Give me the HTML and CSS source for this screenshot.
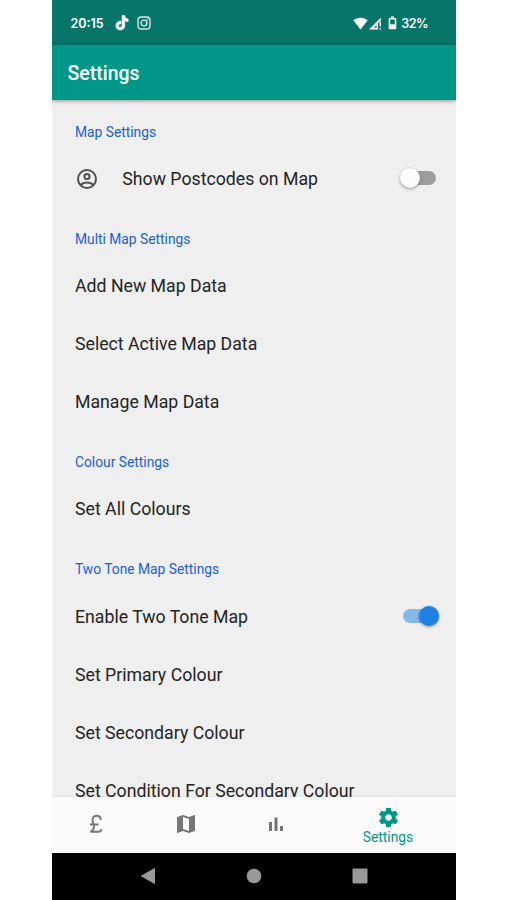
FILE: index.html
```html
<!DOCTYPE html>
<html lang="en">
<head>
<meta charset="utf-8">
<title>Settings</title>
<link rel="stylesheet" href="styles.css">
</head>
<body>
<div class="phone">
  <div class="status">
    <span class="clock">20:15</span>
    <svg class="tiktok" width="14" height="16" viewBox="0 0 14 16"><path d="M7 .5h2.700c.2 2 1.300 3.200 3.500 3.500v2.700c-1.300 0-2.400-.4-3.400-1v4.800c0 6-8.900 6-9 .2 0-3.100 2.500-4.900 5.300-4.500v2.800c-1.400-.3-2.500.4-2.500 1.700 0 2.200 3.400 2.100 3.400-.5z" fill="#fff" stroke="#fff" stroke-width=".5"/></svg>
    <svg class="insta" width="14" height="14" viewBox="0 0 14 14" fill="none" stroke="#d3e8e5" stroke-width="1.400"><rect x="1" y="1" width="12" height="12" rx="3.300"/><circle cx="7" cy="7" r="2.900"/><circle cx="10.400" cy="3.600" r=".8" fill="#d3e8e5" stroke="none"/></svg>
    <span class="spacer"></span>
    <svg width="15" height="13" viewBox="0 0 15 13"><path d="M.3 3.300C4.200-.2 10.800-.2 14.700 3.300L7.500 12.500z" fill="#fff"/></svg>
    <svg class="signal" width="13" height="13" viewBox="0 0 13 13"><path d="M0 12.500L11.800.7V3.500L9 6v6.500z" fill="#fff"/><path d="M5 10.800L7.600 8V10.800z" fill="#08756a"/><path d="M10.500 4.500H12V9.500H10.500zM10.500 11H12v1.500H10.500z" fill="#fff"/></svg>
    <svg class="battery" width="9" height="14" viewBox="0 0 9 14"><path d="M3 .5h3V2h1.200q1.100 0 1.100 1.100v9q0 1.200-1.100 1.200H1.800Q.7 13.300.7 12.100v-9Q.7 2 1.800 2H3z" fill="#fff"/><path d="M2.200 3.500h4.600v4.800H2.200z" fill="#08756a"/></svg>
    <span class="clock percent">32%</span>
  </div>
  <header class="appbar">Settings</header>
  <main class="list">
    <h2>Map Settings</h2>
    <div class="row">
      <svg class="account" width="24" height="24" viewBox="0 0 24 24" fill="none" stroke="#505050" stroke-width="2"><circle cx="12" cy="12" r="9"/><circle cx="12" cy="9.500" r="2.600"/><path d="M5.800 18c3-3.400 9.400-3.400 12.400 0"/></svg>
      <span>Show Postcodes on Map</span>
      <span class="switch"></span>
    </div>
    <h2>Multi Map Settings</h2>
    <div class="row"><span>Add New Map Data</span></div>
    <div class="row"><span>Select Active Map Data</span></div>
    <div class="row"><span>Manage Map Data</span></div>
    <h2>Colour Settings</h2>
    <div class="row"><span>Set All Colours</span></div>
    <h2>Two Tone Map Settings</h2>
    <div class="row"><span>Enable Two Tone Map</span><span class="switch on"></span></div>
    <div class="row"><span>Set Primary Colour</span></div>
    <div class="row"><span>Set Secondary Colour</span></div>
    <div class="row"><span>Set Condition For Secondary Colour</span></div>
  </main>
  <nav class="tabs">
    <div class="tab"><svg width="14" height="20" viewBox="0 0 14 20" fill="none" stroke="#757575" stroke-width="1.900"><path d="M11.800 6C11.500.2 3.500.5 3.500 5.800c0 2.700 1.500 4.200 1.500 7 0 2.300-1.200 3.800-3.500 5h8.300c1.700 0 2.500-.8 2.600-2.800M1 10.500h8.500"/></svg></div>
    <div class="tab"><svg width="24" height="24" viewBox="0 0 24 24" fill="#757575"><path d="M20.500 3l-.16.030L15 5.100 9 3 3.360 4.900c-.21.070-.36.250-.36.480V20.500c0 .28.220.5.500.5l.16-.030L9 18.900l6 2.100 5.640-1.900c.21-.070.36-.250.36-.480V3.500c0-.28-.22-.5-.5-.5zM15 19l-6-2.110V5l6 2.110V19z"/></svg></div>
    <div class="tab"><svg width="16" height="16" viewBox="0 0 16 16" fill="#757575"><path d="M1 6h3v9H1zM6.500 1.500h3V15h-3zM12 10h3v5h-3z"/></svg></div>
    <div class="tab active"><svg width="23" height="23" viewBox="0 0 24 24" fill="#009688"><path d="M19.430 12.980c.04-.32.070-.64.070-.98s-.03-.66-.07-.98l2.110-1.650c.19-.15.240-.42.120-.64l-2-3.460c-.12-.22-.39-.3-.61-.22l-2.490 1c-.52-.4-1.080-.73-1.690-.98l-.38-2.650C14.460 2.180 14.250 2 14 2h-4c-.25 0-.46.18-.49.42l-.38 2.650c-.61.25-1.170.59-1.690.98l-2.490-1c-.23-.09-.49 0-.61.220l-2 3.460c-.13.220-.07.490.120.640l2.110 1.650c-.04.320-.07.650-.07.980s.030.660.070.980l-2.110 1.650c-.19.150-.24.420-.12.640l2 3.460c.120.220.390.300.610.220l2.490-1c.520.400 1.080.730 1.690.980l.380 2.650c.030.240.240.420.490.420h4c.250 0 .460-.180.490-.420l.380-2.650c.610-.250 1.170-.590 1.690-.980l2.490 1c.230.090.490 0 .610-.220l2-3.460c.120-.220.070-.490-.120-.640l-2.110-1.650zM12 15.500c-1.930 0-3.500-1.570-3.500-3.500s1.570-3.500 3.500-3.500 3.500 1.570 3.500 3.500-1.570 3.500-3.500 3.500z"/></svg><span>Settings</span></div>
  </nav>
  <div class="system">
    <svg width="16" height="18" viewBox="0 0 16 18"><path d="M1.500 9L14.500 1.500v15z" fill="#999" stroke="#999" stroke-linejoin="round"/></svg>
    <svg width="16" height="16" viewBox="0 0 16 16"><circle cx="8" cy="8" r="7.300" fill="#999"/></svg>
    <svg width="16" height="16" viewBox="0 0 16 16"><rect x=".5" y=".5" width="15" height="15" rx="1" fill="#999"/></svg>
  </div>
</div>
</body>
</html>
```
FILE: styles.css
```css
* { box-sizing: border-box; }
body {
  margin: 0;
  background: #fff;
  font-family: Roboto, "Liberation Sans", sans-serif;
}
.phone {
  width: 404.5px;
  height: 900px;
  margin-left: 51.5px;
  display: flex;
  flex-direction: column;
  overflow: hidden;
  background: #efefef;
}
.status {
  height: 45px;
  flex: none;
  display: flex;
  align-items: center;
  padding: 1px 28px 0 19px;
  background: #08756a;
  color: #fff;
}
.clock {
  font: 600 12.500px Inter, sans-serif;
}
.percent {
  letter-spacing: -.5px;
}
.tiktok { margin-left: 11px; }
.insta { margin-left: 8px; }
.spacer { flex: 1; }
.signal { margin-left: 1px; }
.battery { margin: 0 4px 0 6px; }
.appbar {
  height: 55px;
  flex: none;
  padding-left: 16px;
  line-height: 58px;
  font-size: 19.500px;
  font-weight: 500;
  color: #fff;
  background: #009688;
  box-shadow: 0 1px 4px rgba(0, 0, 0, .4);
  z-index: 1;
}
.list {
  flex: 1;
  min-height: 0;
  overflow: hidden;
  padding: .800px 16px 0 23.500px;
}
h2 {
  height: 49.200px;
  margin: 0;
  padding-top: 21px;
  font-size: 13.800px;
  line-height: 20px;
  font-weight: 400;
  color: #1a5fd8;
}
.row {
  height: 58px;
  display: flex;
  align-items: center;
  font-size: 17.720px;
  color: #242424;
  white-space: nowrap;
}
.account { margin-right: 23.300px; }
.switch {
  width: 33px;
  height: 14px;
  margin: 0 4px 1px auto;
  border-radius: 7px;
  background: #9d9d9d;
  display: flex;
  align-items: center;
}
.switch::before {
  content: "";
  flex: none;
  width: 20px;
  height: 20px;
  margin-left: -3px;
  border-radius: 50%;
  background: #fcfcfc;
  box-shadow: 0 1px 3px rgba(0, 0, 0, .4);
}
.switch.on {
  background: #84b9ec;
  justify-content: flex-end;
}
.switch.on::before {
  background: #1e82e2;
  margin-right: -3px;
}
.tabs {
  height: 56px;
  flex: none;
  display: grid;
  grid-template-columns: 89.500px 90px 90px 1fr;
  background: #fafafa;
  box-shadow: 0 -1px 1px rgba(0, 0, 0, .04);
}
.tab {
  display: flex;
  flex-direction: column;
  align-items: center;
  justify-content: center;
  padding-bottom: 2px;
}
.active {
  padding: 1px 1px 0 0;
  font-size: 13.800px;
  line-height: 17px;
  color: #009688;
}
.system {
  height: 47px;
  flex: none;
  display: flex;
  align-items: center;
  justify-content: space-between;
  padding: 0 88.500px 1px 88px;
  background: #000;
}
```
